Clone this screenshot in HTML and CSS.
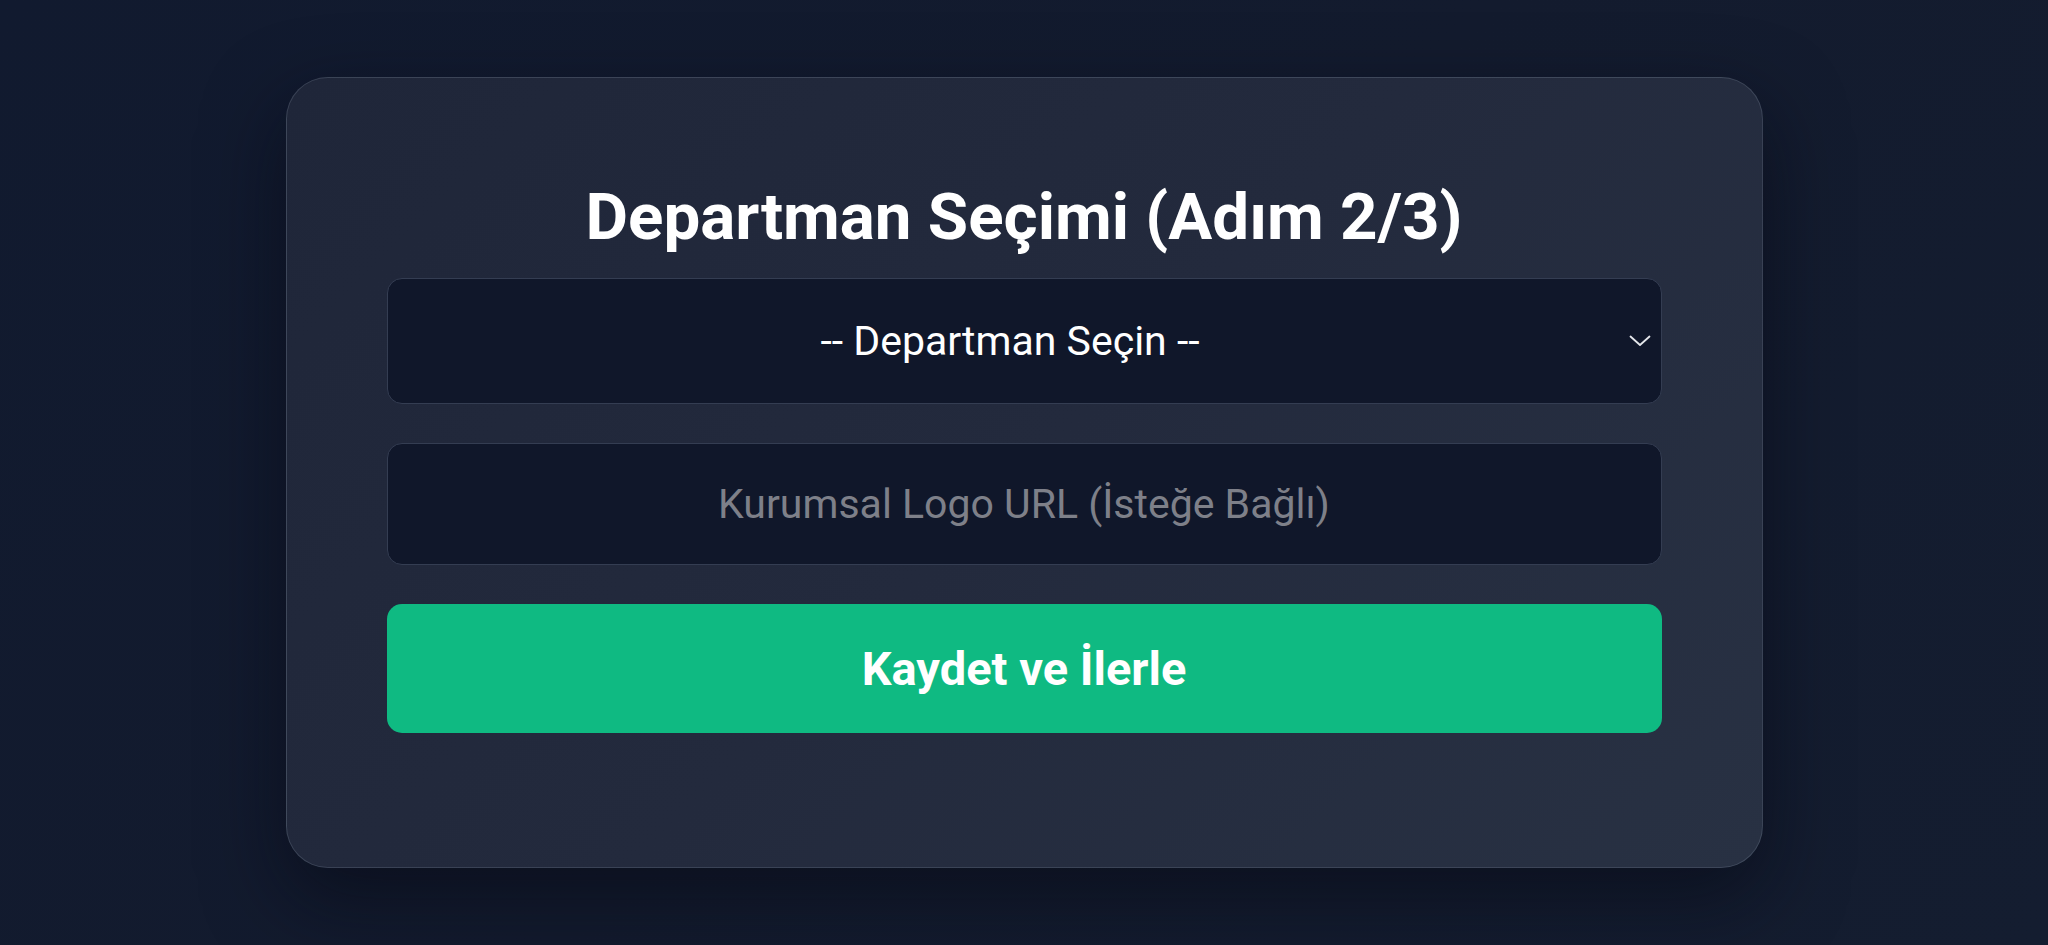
FILE: index.html
```html
<!DOCTYPE html>
<html lang="tr">
<head>
<meta charset="utf-8">
<title>Departman Seçimi</title>
<link rel="stylesheet" href="styles.css">
</head>
<body>
<main class="page">
  <section class="card">
    <h1 class="title">Departman Seçimi (Adım 2/3)</h1>
    <form class="form">
      <div class="select-wrap">
        <select class="field select">
          <option>-- Departman Seçin --</option>
        </select>
        <svg class="chevron" width="22" height="12" viewBox="0 0 22 12" aria-hidden="true">
          <path d="M1.5 1.5 L11 10 L20.5 1.5" fill="none" stroke="#e5e7eb" stroke-width="1.8" stroke-linecap="round" stroke-linejoin="round"/>
        </svg>
      </div>
      <input class="field input" type="text" placeholder="Kurumsal Logo URL (İsteğe Bağlı)">
      <button class="btn" type="button">Kaydet ve İlerle</button>
    </form>
  </section>
</main>
</body>
</html>
```

FILE: styles.css
```css
* { box-sizing: border-box; }
html, body { margin: 0; height: 100%; }
body {
  background: linear-gradient(135deg, #111a2f 0%, #131b2e 50%, #141d30 100%);
  font-family: Roboto, "Noto Sans", "Liberation Sans", sans-serif;
  color: #fff;
}
.page {
  height: 945px;
  display: flex;
  align-items: center;
  justify-content: center;
}
.card {
  width: 1477px;
  height: 791px;
  padding: 100px 100px 134px;
  border-radius: 42px;
  border: 1px solid rgba(148, 163, 184, 0.22);
  background: linear-gradient(135deg, #1f2639 0%, #232a3d 50%, #283143 100%);
  box-shadow: 0 30px 80px rgba(5, 8, 18, 0.55);
}
.title {
  margin: 0 0 22px;
  text-align: center;
  font-size: 65.5px;
  font-weight: 700;
  line-height: 78px;
  letter-spacing: 0;
}
.form {
  display: flex;
  flex-direction: column;
  gap: 39px;
}
.select-wrap { position: relative; }
.field {
  display: block;
  width: 100%;
  background: #10172a;
  border: 1.5px solid #343d52;
  border-radius: 15px;
  color: #fff;
  font-family: Roboto, "Noto Sans", "Liberation Sans", sans-serif;
  font-size: 41px;
  text-align: center;
  outline: none;
}
.select {
  height: 126px;
  appearance: none;
  -webkit-appearance: none;
  text-align-last: center;
  padding: 0 68px 0 40px;
}
.input {
  height: 122px;
  padding: 0 40px;
}
.input::placeholder { color: #7e8089; }
.chevron {
  position: absolute;
  right: 11px;
  top: 57px;
}
.btn {
  height: 129px;
  border: none;
  border-radius: 15px;
  background: #0fba82;
  color: #fff;
  font-family: Roboto, "Noto Sans", "Liberation Sans", sans-serif;
  font-size: 47px;
  font-weight: 700;
  cursor: pointer;
}
```
